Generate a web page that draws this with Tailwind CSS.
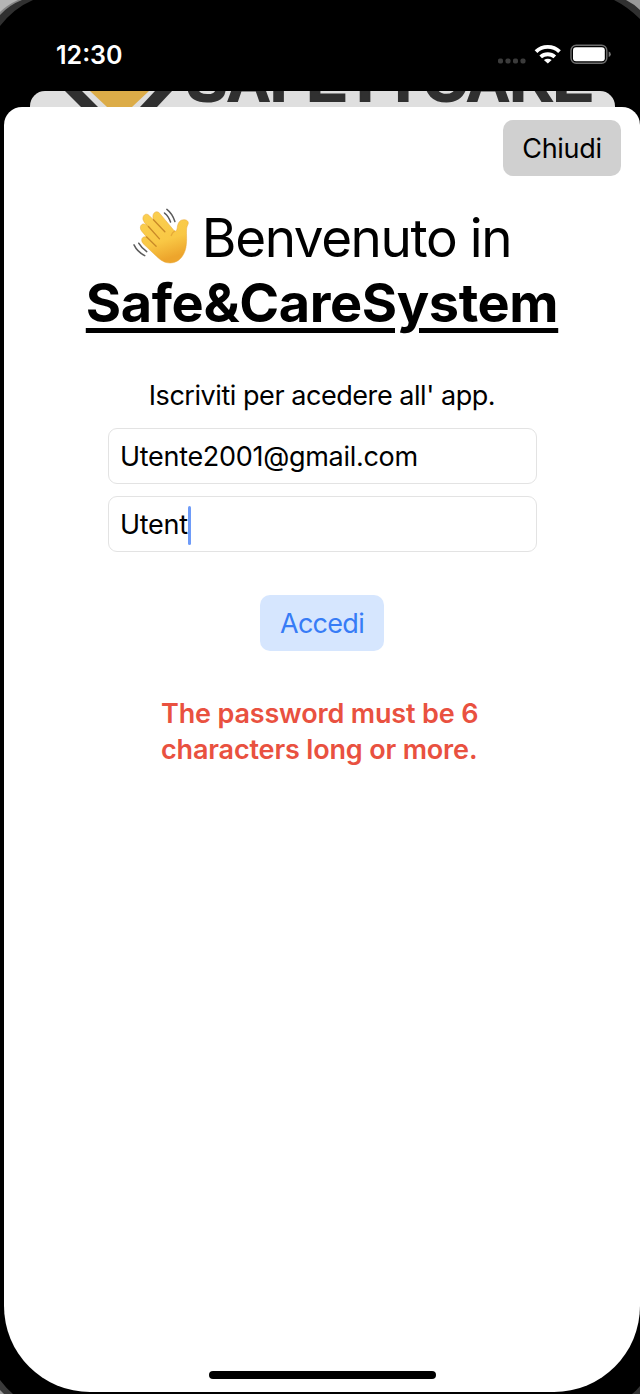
<!DOCTYPE html>
<html lang="it">
<head>
<meta charset="utf-8">
<title>Safe&amp;CareSystem</title>
<script src="https://cdn.jsdelivr.net/npm/@tailwindcss/browser@4"></script>
</head>
<body class="w-[640px] h-[1394px] overflow-hidden bg-black font-['Inter',sans-serif] text-black">
<div class="relative w-[640px] h-[1394px] overflow-hidden flex flex-col">
  <!-- Device bezel corners -->
  <svg class="absolute inset-0 pointer-events-none" width="640" height="1394" viewBox="0 0 640 1394">
    <path d="M0 0H33Q14 8 0 26Z" fill="#303030"/>
    <path d="M0 0H22Q9 5 0 15Z" fill="#858585"/>
    <path d="M0 0H18Q7 5 0 12Z" fill="#b5b5b5"/>
    <path d="M640 0H614Q628 7 640 19Z" fill="#303030"/>
    <path d="M640 0H626Q634 4 640 10Z" fill="#999"/>
    <path d="M0 1380Q6 1388 13 1394H0Z" fill="#3a3a3a"/>
    <path d="M0 1390L4 1394H0Z" fill="#999"/>
    <path d="M640 1386Q636 1391 632 1394H640Z" fill="#333"/>
  </svg>

  <!-- Status bar -->
  <header class="h-[91px] shrink-0 flex items-start justify-between pl-[56px] pr-[29px] text-white">
    <div class="mt-[39px] text-[25px] leading-8 font-semibold">12:30</div>
    <svg class="mt-[40px]" width="114" height="28" viewBox="497 40 114 28">
      <g fill="#3b3b3b"><rect x="498" y="58.5" width="5" height="5" rx="1.8"/><rect x="505.500" y="58.5" width="5" height="5" rx="1.8"/><rect x="513" y="58.5" width="5" height="5" rx="1.8"/><rect x="520.500" y="58.5" width="5" height="5" rx="1.8"/></g>
      <g fill="none" stroke="#fff" stroke-width="3.9"><path d="M536 51.600A17 17 0 0 1 559.500 51.600"/><path d="M540.700 56.900A10.500 10.500 0 0 1 554.800 56.900"/></g>
      <path d="M543.900 59.900Q547.800 57.400 551.700 59.900L547.800 63.600Z" fill="#fff"/>
      <rect x="571" y="45.200" width="35.800" height="18" rx="5.200" fill="none" stroke="#6e6e6e" stroke-width="1.400"/>
      <rect x="573" y="47.300" width="31.800" height="13.900" rx="3" fill="#fff"/>
      <path d="M608.700 51.500Q610.800 52.200 610.800 54.200T608.700 57Z" fill="#777"/>
    </svg>
  </header>

  <!-- Page behind the sheet -->
  <div class="h-4 shrink-0 ml-[30px] w-[585px] rounded-t-[15px] bg-[#dfdfdf] overflow-hidden">
    <svg width="585" height="16" viewBox="30 91 585 16">
      <path d="M65 91H82L98 107H81Z" fill="#303030"/>
      <path d="M155 91H172L157 107H140Z" fill="#303030"/>
      <path d="M90 91H149L132 107H107Z" fill="#dcac48"/>
      <text x="187" y="101" font-family="Liberation Sans" font-weight="700" font-size="60" textLength="406" lengthAdjust="spacingAndGlyphs" fill="#303030" stroke="#303030" stroke-width="2">SAFETYCARE</text>
    </svg>
  </div>

  <!-- Sheet -->
  <main class="ml-1 w-[636px] h-[1285px] shrink-0 bg-white rounded-t-[18px] rounded-b-[86px] flex flex-col items-center overflow-hidden">
    <div class="self-end mt-[13px] mr-[19px] w-[118px] h-[56px] rounded-[10px] bg-[#d0d0d0] flex items-center justify-center pt-[3px] text-[27px] tracking-[-0.3px]">Chiudi</div>

    <h1 class="mt-[28px] flex flex-col items-center text-[54px] leading-[66px]">
      <span class="flex items-center h-[66px] whitespace-nowrap">
        <svg class="mr-[12px] -mt-[4px]" role="img" aria-label="wave" width="57" height="57" viewBox="40 36 170 170">
          <defs>
            <linearGradient id="skin" x1="0" y1="0" x2="0.300" y2="1"><stop offset="0" stop-color="#fbd052"/><stop offset="0.650" stop-color="#f9c845"/><stop offset="1" stop-color="#eda52c"/></linearGradient>
          </defs>
          <path d="M70 74C67 61 79 52 88 61L101 74C95 58 106 44 118 53L164 108C169 109 171 105 172 98C173 83 181 72 195 74C205 76 207 83 203 90C196 103 202 123 199 148C197 174 181 203 151 203C133 203 123 195 110 183L70 145C61 134 68 121 81 126L66 108C56 96 66 80 80 89L90 98L74 82Z" fill="url(#skin)" stroke="#e9a938" stroke-width="1.500"/>
          <g fill="none" stroke="#c98a28" stroke-width="4" stroke-linecap="round"><path d="M101 74L135 110"/><path d="M86 94L119 131"/><path d="M80 125L109 153"/><path d="M164 108Q157 112 154 121" stroke="#e6aa38"/></g>
          <g fill="none" stroke="#5c5c5c" stroke-width="4.500" stroke-linecap="round"><path d="M141 43Q157 55 165 79"/><path d="M134 54Q146 63 152 81"/><path d="M57 144Q65 158 81 169"/><path d="M43 149Q53 170 75 181"/></g>
        </svg>
        <span class="text-[53px] tracking-[-1.4px] font-normal pt-px">Benvenuto in</span>
      </span>
      <span class="font-bold tracking-[-0.4px] underline decoration-[5px] underline-offset-[6px]">Safe&amp;CareSystem</span>
    </h1>

    <p class="mt-[35px] h-[50px] leading-[50px] text-[27px] tracking-[-0.45px]">Iscriviti per acedere all' app.</p>

    <div class="mt-[7px] flex flex-col gap-3">
      <div class="w-[429px] h-[56px] rounded-[9px] border border-[#e3e3e3] pl-[11.500px] pt-[3px] flex items-center text-[27px] tracking-[-0.3px]"><span>Utente2001@gmail.com</span></div>
      <div class="w-[429px] h-[56px] rounded-[9px] border border-[#e3e3e3] pl-[11.500px] pt-[3px] flex items-center text-[27px] tracking-[-0.3px]"><span>Utent</span><i class="-mt-px w-[3px] h-[39px] rounded-full bg-[#6e9bf8]"></i></div>
    </div>

    <div class="mt-[43px] w-[124px] h-[56px] rounded-[10px] bg-[#d6e6fe] flex items-center justify-center pt-[2px] text-[27px] tracking-[-0.7px] text-[#377cf6]">Accedi</div>

    <p class="mt-[45px] w-[322px] whitespace-nowrap text-[27px] leading-9 font-semibold tracking-[-0.16px] text-[#e95140]">The password must be 6<br>characters long or more.</p>

    <div class="mt-auto mb-[13px] w-[227px] h-2 rounded-full bg-black"></div>
  </main>
</div>
</body>
</html>
